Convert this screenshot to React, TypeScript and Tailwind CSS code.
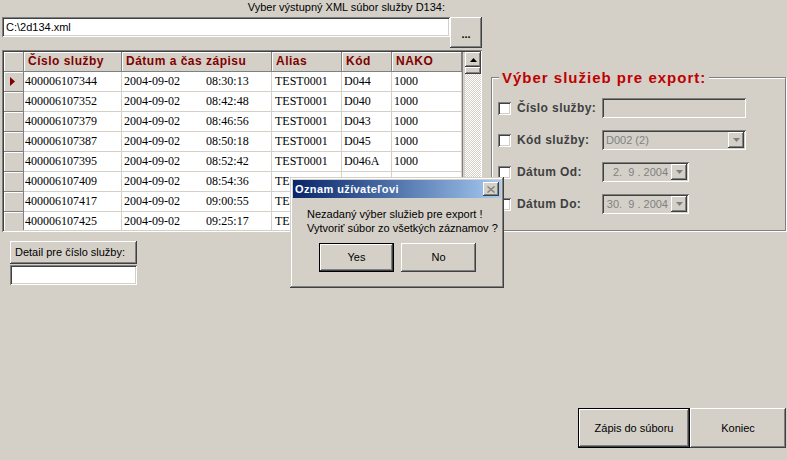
const RAISED =
  "shadow-[inset_-1px_-1px_#404040,inset_1px_1px_#ffffff,inset_-2px_-2px_#808080,inset_2px_2px_#d4d0c8]"
const SUNKEN =
  "shadow-[inset_1px_1px_#808080,inset_-1px_-1px_#ffffff,inset_2px_2px_#404040,inset_-2px_-2px_#d4d0c8]"
const FRAME =
  "shadow-[inset_-1px_-1px_#404040,inset_1px_1px_#d4d0c8,inset_-2px_-2px_#808080,inset_2px_2px_#ffffff]"
const SMALL_RAISED =
  "shadow-[inset_-1px_-1px_#404040,inset_1px_1px_#ffffff,inset_-2px_-2px_#808080]"

// rows 6-8 are partly hidden under the message box
const rows = [
  ["400006107344", "2004-09-02", "08:30:13", "TEST0001", "D044", "1000"],
  ["400006107352", "2004-09-02", "08:42:48", "TEST0001", "D040", "1000"],
  ["400006107379", "2004-09-02", "08:46:56", "TEST0001", "D043", "1000"],
  ["400006107387", "2004-09-02", "08:50:18", "TEST0001", "D045", "1000"],
  ["400006107395", "2004-09-02", "08:52:42", "TEST0001", "D046A", "1000"],
  ["400006107409", "2004-09-02", "08:54:36", "TE", "", ""],
  ["400006107417", "2004-09-02", "09:00:55", "TE", "", ""],
  ["400006107425", "2004-09-02", "09:25:17", "TE", "", ""],
]

function Tri({ up = false, color = "#000000" }: { up?: boolean; color?: string }) {
  return (
    <svg width="7" height="4" viewBox="0 0 7 4">
      <path d={up ? "M3.5 0 L7 4 L0 4 Z" : "M0 0 L7 0 L3.5 4 Z"} fill={color} />
    </svg>
  )
}

function DropButton() {
  return (
    <div className={`w-[16px] h-[16px] bg-[#d4d0c8] flex items-center justify-center ${RAISED}`}>
      <Tri color="#808080" />
    </div>
  )
}

function Checkbox() {
  return <div className={`w-[13px] h-[13px] bg-white shrink-0 ${SUNKEN}`} />
}

function Grid() {
  return (
    <div className={`w-[480px] h-[182px] bg-[#d4d0c8] p-[2px] flex ${SUNKEN}`}>
      <div className="w-[458px] h-[178px] overflow-hidden flex flex-col">
        {/* Header */}
        <div className="flex h-[20px] shrink-0 font-bold text-[12px] tracking-[0.5px] text-[#800000] leading-[19px]">
          <div className="w-[20px] border-r border-b border-[#808080] shadow-[inset_1px_1px_#ffffff]" />
          <div className="w-[98px] pl-[4px] border-r border-b border-[#808080] shadow-[inset_1px_1px_#ffffff]">Číslo služby</div>
          <div className="w-[150px] pl-[4px] border-r border-b border-[#808080] shadow-[inset_1px_1px_#ffffff]">Dátum a čas zápisu</div>
          <div className="w-[70px] pl-[4px] border-r border-b border-[#808080] shadow-[inset_1px_1px_#ffffff]">Alias</div>
          <div className="w-[50px] pl-[4px] border-r border-b border-[#808080] shadow-[inset_1px_1px_#ffffff]">Kód</div>
          <div className="w-[70px] pl-[4px] border-r border-b border-[#808080] shadow-[inset_1px_1px_#ffffff]">NAKO</div>
        </div>
        {/* Rows */}
        {rows.map((r, i) => (
          <div key={r[0]} className="flex h-[20px] shrink-0 font-['Liberation_Serif',serif] text-[12px] leading-[19px]">
            <div className="w-[20px] bg-[#d4d0c8] border-r border-b border-[#808080] shadow-[inset_1px_1px_#ffffff] flex items-center pl-[6px]">
              {i === 0 && (
                <svg width="5" height="9" viewBox="0 0 5 9">
                  <path d="M0 0 L5 4.5 L0 9 Z" fill="#800000" />
                </svg>
              )}
            </div>
            <div className="w-[98px] pl-[1px] bg-white border-r border-b border-[#d4d0c8]">{r[0]}</div>
            <div className="w-[150px] pl-[2px] bg-white border-r border-b border-[#d4d0c8] flex">
              <span className="w-[82px]">{r[1]}</span>
              <span>{r[2]}</span>
            </div>
            <div className="w-[70px] pl-[3px] bg-white border-r border-b border-[#d4d0c8]">{r[3]}</div>
            <div className="w-[50px] pl-[2px] bg-white border-r border-b border-[#d4d0c8]">{r[4]}</div>
            <div className="w-[70px] pl-[2px] bg-white border-r border-b border-[#d4d0c8]">{r[5]}</div>
          </div>
        ))}
      </div>
      {/* Scrollbar */}
      <div className="w-[18px] h-[178px] flex flex-col pl-[2px] border-l border-[#808080]">
        <div className={`w-[16px] h-[15px] bg-[#d4d0c8] flex items-center justify-center shrink-0 ${RAISED}`}>
          <Tri up />
        </div>
        <div className={`w-[16px] h-[7px] bg-[#d4d0c8] shrink-0 ${SMALL_RAISED}`} />
        <div className="w-[16px] flex-1 bg-[image:repeating-conic-gradient(#ffffff_0%_25%,#d4d0c8_0%_50%)] bg-[length:2px_2px]" />
      </div>
    </div>
  )
}

function FilterRow({ label, children }: { label: string; children: React.ReactNode }) {
  return (
    <div className="flex items-center h-[32px]">
      <Checkbox />
      <div className="ml-[6px] w-[85px] font-bold text-[12px] tracking-[0.4px] text-[#404040] whitespace-nowrap">{label}</div>
      {children}
    </div>
  )
}

function DateField({ value }: { value: string }) {
  return (
    <div className={`w-[87px] h-[20px] bg-[#d4d0c8] flex items-center justify-end pr-[2px] ${SUNKEN}`}>
      <span className="text-[#808080] whitespace-pre mr-[3px]">{value}</span>
      <DropButton />
    </div>
  )
}

export default function App() {
  return (
    <div className="w-[787px] h-[460px] bg-[#d4d0c8] relative overflow-hidden flex flex-col font-['Liberation_Sans',Arial,sans-serif] text-[11px] text-black select-none">
      {/* Output file selection */}
      <div className="pl-[2px]">
        <div className="w-[447px] h-[17px] pr-[4px] pt-[1px] text-right leading-[13px]">
          Vyber výstupný XML súbor služby D134:
        </div>
        <div className="flex items-start">
          <div className={`w-[448px] h-[20px] bg-white pl-[4px] leading-[20px] ${SUNKEN}`}>C:\2d134.xml</div>
          <div className={`w-[32px] h-[31px] bg-[#d4d0c8] flex items-center justify-center font-bold pt-[3px] ${RAISED}`}>
            ...
          </div>
        </div>
      </div>

      <div className="flex items-start mt-[2px] pl-[2px]">
        {/* Left column */}
        <div className="flex flex-col">
          <Grid />
          <div className="ml-[8px] mt-[9px] flex flex-col w-[127px]">
            <div className={`h-[23px] bg-[#d4d0c8] pl-[5px] leading-[23px] ${RAISED}`}>Detail pre číslo služby:</div>
            <div className={`h-[20px] mt-[1px] bg-white ${SUNKEN}`} />
          </div>
        </div>

        {/* Filter group */}
        <fieldset className="ml-[9px] mt-[20px] w-[295px] h-[161px] border border-[#808080] shadow-[inset_1px_1px_#ffffff,1px_1px_#ffffff] px-[6px]">
          <legend className="ml-[1px] px-[3px] bg-[#d4d0c8] text-[15px] font-bold tracking-[1px] text-[#c00000] leading-[15px]">
            Výber služieb pre export:
          </legend>
          <div className="pt-[7px] flex flex-col">
            <FilterRow label="Číslo služby:">
              <div className={`w-[144px] h-[20px] bg-[#d4d0c8] ${SUNKEN}`} />
            </FilterRow>
            <FilterRow label="Kód služby:">
              <div className={`w-[144px] h-[20px] bg-[#d4d0c8] flex items-center pl-[4px] pr-[2px] ${SUNKEN}`}>
                <span className="flex-1 text-[#808080]">D002 (2)</span>
                <DropButton />
              </div>
            </FilterRow>
            <FilterRow label="Dátum Od:">
              <DateField value={"2.  9 . 2004"} />
            </FilterRow>
            <FilterRow label="Dátum Do:">
              <DateField value={"30.  9 . 2004"} />
            </FilterRow>
          </div>
        </fieldset>
      </div>

      {/* Bottom buttons */}
      <div className="mt-auto flex justify-end pr-[1px] pb-[12px]">
        <div className="w-[112px] h-[40px] border border-black">
          <div className={`w-full h-full bg-[#d4d0c8] flex items-center justify-center ${RAISED}`}>Zápis do súboru</div>
        </div>
        <div className={`w-[96px] h-[40px] bg-[#d4d0c8] flex items-center justify-center ${RAISED}`}>Koniec</div>
      </div>

      {/* Message box */}
      <div className={`absolute left-[290px] top-[177px] w-[214px] h-[111px] bg-[#d4d0c8] p-[3px] flex flex-col ${FRAME}`}>
        <div className="h-[18px] bg-gradient-to-r from-[#0a246a] to-[#a6caf0] flex items-center justify-between pl-[2px] pr-[2px]">
          <span className="text-white font-bold text-[11px] tracking-[0.4px]">Oznam užívateľovi</span>
          <div className={`w-[16px] h-[14px] bg-[#d4d0c8] flex items-center justify-center ${RAISED}`}>
            <svg width="8" height="7" viewBox="0 0 8 7">
              <path d="M0.5 0.5 L7.5 6.5 M7.5 0.5 L0.5 6.5" stroke="#808080" strokeWidth="1.4" />
            </svg>
          </div>
        </div>
        <div className="pl-[14px] mt-[9px] leading-[14px]">
          <div>Nezadaný výber služieb pre export !</div>
          <div>Vytvoriť súbor zo všetkých záznamov ?</div>
        </div>
        <div className="flex gap-[7px] pl-[26px] mt-[8px]">
          <div className="w-[75px] h-[29px] border border-black">
            <div className={`w-full h-full bg-[#d4d0c8] flex items-center justify-center ${RAISED}`}>Yes</div>
          </div>
          <div className={`w-[75px] h-[29px] bg-[#d4d0c8] flex items-center justify-center ${RAISED}`}>No</div>
        </div>
      </div>
    </div>
  )
}
